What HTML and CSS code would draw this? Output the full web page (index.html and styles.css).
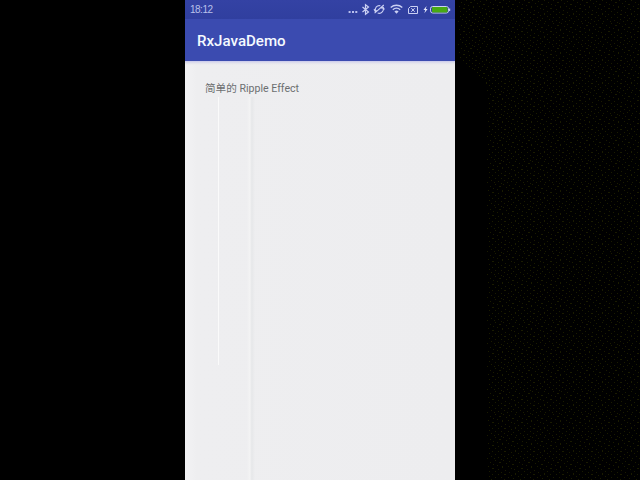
FILE: index.html
```html
<!DOCTYPE html>
<html lang="zh-CN">
<head>
<meta charset="utf-8">
<title>RxJavaDemo</title>
<link rel="stylesheet" href="styles.css">
</head>
<body>
<div class="phone">
  <header class="status-bar">
    <span class="time">18:12</span>
    <svg class="status-icons" width="106" height="18" viewBox="0 0 106 18" fill="none" stroke="#cbd0f3" stroke-width="1">
      <g fill="#b9c0ee" stroke="none">
        <rect x="3.6" y="11" width="2" height="2"/><rect x="7" y="11" width="2" height="2"/><rect x="10.3" y="11" width="2" height="2"/>
      </g>
      <path d="M17.5 7l6 5-3 2.3V4.7l3 2.3-6 5" stroke-width="1.2"/>
      <path d="M29.6 13.2L38.8 5M30.6 11.2a4 4 0 0 1 4.8-5.4M37.7 7.3a4 4 0 0 1-5 5.7M29 9.3l1.2 2 2-.8M39.4 9.5l-1.2-2-2 .8" stroke-width="1.1"/>
      <path d="M45.7 7.5a8.8 8.8 0 0 1 11.6 0M47.8 9.7a5.6 5.6 0 0 1 7.4 0" stroke-width="1.4"/>
      <path d="M49.4 11.4a3.2 3.2 0 0 1 4.2 0L51.5 13.7z" fill="#cbd0f3" stroke="none"/>
      <path d="M65.5 6.5h7v7h-9v-5zM66.3 8.2l3.4 3.6M69.7 8.2l-3.4 3.6"/>
      <path d="M81.6 6l-3.2 4h1.8l-.8 3.2 3.2-4.2h-1.8z" fill="#e1e5fa" stroke="none"/>
      <rect x="85.5" y="6.5" width="18" height="6.5" rx="2.2"/>
      <path d="M104.6 8.5v2.5" stroke-width="1.2"/>
      <rect x="87" y="7" width="15.5" height="5.5" rx="1" fill="#48a914" stroke="none"/>
    </svg>
  </header>
  <div class="app-bar"><h1 class="title">RxJavaDemo</h1></div>
  <main class="content"><p class="label">简单的 Ripple Effect</p></main>
</div>
<svg class="grain" width="185" height="480" viewBox="0 0 185 480" shape-rendering="crispEdges">
  <defs>
    <pattern id="dots" width="29" height="23" patternUnits="userSpaceOnUse">
      <path fill="#1a1b00" d="M2 0h1v1h-1zM11 0h1v1h-1zM19 0h1v1h-1zM25 1h1v1h-1zM6 2h1v1h-1zM15 2h2v1h-2zM22 3h1v1h-1zM0 4h1v1h-1zM9 4h1v1h-1zM28 4h1v1h-1zM4 6h1v1h-1zM13 5h1v1h-1zM18 6h1v2h-1zM24 6h1v1h-1zM8 8h2v1h-2zM27 8h1v1h-1zM1 9h1v1h-1zM14 9h1v1h-1zM21 10h1v1h-1zM5 11h1v1h-1zM11 11h1v1h-1zM17 12h1v1h-1zM25 12h1v1h-1zM2 13h1v2h-1zM8 14h1v1h-1zM14 14h1v1h-1zM20 14h2v1h-2zM27 15h1v1h-1zM5 16h1v1h-1zM11 17h1v1h-1zM17 17h1v1h-1zM24 17h1v1h-1zM0 18h1v1h-1zM7 19h1v1h-1zM14 20h1v1h-1zM20 19h1v1h-1zM27 20h1v1h-1zM3 21h1v1h-1zM10 21h1v1h-1zM17 22h1v1h-1zM23 21h1v1h-1z"/>
    </pattern>
  </defs>
  <path fill="url(#dots)" d="M3 0H185V480H32V85L17 70L3 60z"/>
</svg>
</body>
</html>
```
FILE: styles.css
```css
body {
  margin: 0;
  height: 480px;
  display: flex;
  overflow: hidden;
  background: #000;
}

.phone {
  width: 270px;
  height: 480px;
  margin-left: 185px;
  display: flex;
  flex-direction: column;
  font-family: Roboto, "Noto Sans CJK SC", sans-serif;
}

.status-bar {
  height: 19px;
  display: flex;
  justify-content: space-between;
  background: linear-gradient(#3442a4, #303f9f);
}

.time {
  padding-left: 5px;
  font-size: 10px;
  line-height: 20px;
  letter-spacing: -0.5px;
  color: #b9c0ea;
  font-family: "Liberation Sans", sans-serif;
}

.status-icons {
  margin-right: 4px;
}

.app-bar {
  height: 42px;
  display: flex;
  align-items: center;
  padding-left: 12px;
  background: #3b4bb0;
}

.title {
  margin: 0;
  padding-top: 2px;
  font-size: 15.1px;
  font-weight: 500;
  line-height: 20px;
  color: #f5faff;
}

.content {
  flex: 1;
  padding: 20px 20px 19px;
  background:
    linear-gradient(#c9c9ec, #e3e3ec 2px, transparent 4px),
    linear-gradient(#fafafa, #fafafa) 33px 36px / 1px 268px no-repeat,
    linear-gradient(90deg, transparent, #f3f3f4 35%, #e6e7e9 60%, transparent) 62px 36px / 8px 100% no-repeat,
    linear-gradient(90deg, #f2f2f4, #eeeef0 12px, #ededef 100%);
}

.label {
  margin: 0;
  font-size: 10.6px;
  line-height: 16px;
  color: #6c6e70;
  white-space: nowrap;
}

.grain {
  display: block;
  flex: none;
}
```
